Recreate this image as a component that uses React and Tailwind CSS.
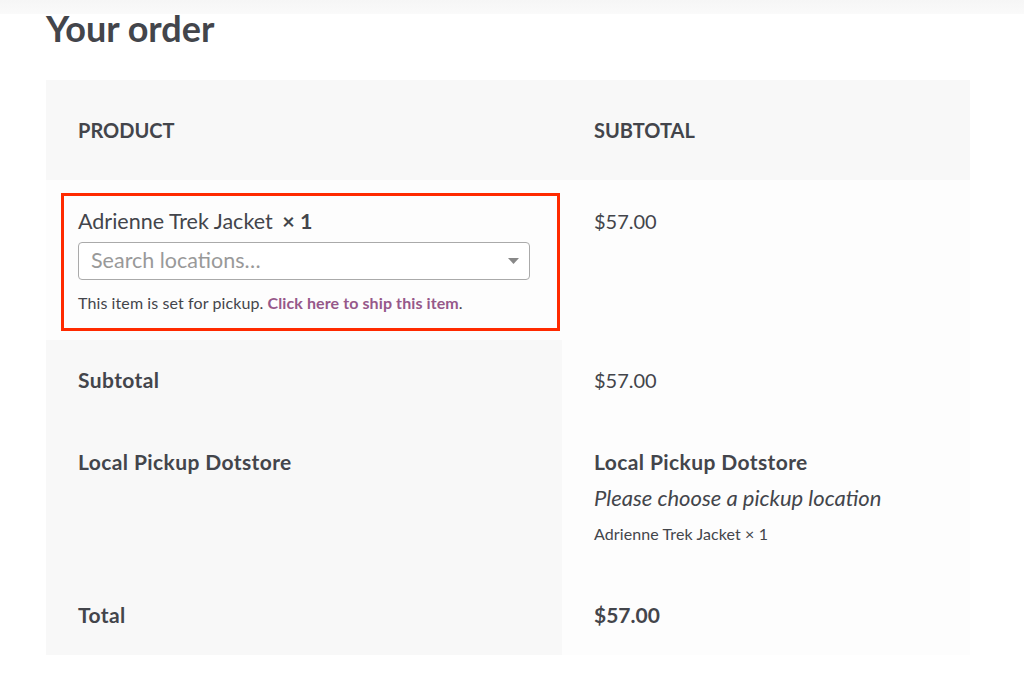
import { useState } from 'react';

const font = { fontFamily: 'Lato, "Source Sans Pro", "Noto Sans", sans-serif' };

function LocationSelect() {
  const [value] = useState('');
  return (
    <div className="relative mt-[3px] flex h-[38px] w-[452px] items-center rounded-[4px] border border-[#aaaaaa] bg-white pl-[12px] pr-[10px]">
      <span className="flex-1 text-[21.5px] leading-none text-[#999999]">{value || 'Search locations…'}</span>
      <svg width="11" height="6" viewBox="0 0 11 6">
        <path d="M0 0h11L5.5 6z" fill="#888888" />
      </svg>
    </div>
  );
}

export default function App() {
  return (
    <div className="min-h-screen bg-white text-[#43454b]" style={font}>
      <div className="h-[14px] bg-gradient-to-b from-[#f6f6f6] to-[#fafafa]" />

      <div className="px-[46px]">
        <h3 className="-mt-[8px] text-[36px] font-bold leading-[44px]">Your order</h3>

        <div className="mt-[30px] grid w-[924px] grid-cols-[516px_408px]">
          {/* header */}
          <div className="flex h-[100px] items-center bg-[#f8f8f8] px-[32px] text-[20px] font-bold uppercase">
            Product
          </div>
          <div className="flex h-[100px] items-center bg-[#f8f8f8] px-[32px] text-[20px] font-bold uppercase">
            Subtotal
          </div>

          {/* product row */}
          <div className="relative bg-[#fdfdfd] px-[32px] pb-[25px] pt-[23px]">
            <div className="text-[21.5px] leading-[36px]">
              Adrienne Trek Jacket <strong className="ml-[4px] font-bold">×&nbsp;1</strong>
            </div>
            <LocationSelect />
            <p className="mt-[11px] text-[16px] leading-[24px] tracking-[0.1px]">
              This item is set for pickup.{' '}
              <a href="#" className="font-bold text-[#96588a]">Click here to ship this item</a>.
            </p>
            <div className="pointer-events-none absolute left-[15px] top-[13px] h-[138px] w-[499px] border-[3px] border-[#ff2a00]" />
          </div>
          <div className="bg-[#fdfdfd] px-[32px] pt-[23px] text-[20px] leading-[36px]">$57.00</div>

          {/* subtotal */}
          <div className="bg-[#f8f8f8] px-[32px] py-[22px] text-[21px] font-bold leading-[36px] tracking-[0.4px]">Subtotal</div>
          <div className="bg-[#fdfdfd] px-[32px] py-[22px] text-[20px] leading-[36px]">$57.00</div>

          {/* shipping */}
          <div className="bg-[#f8f8f8] px-[32px] pb-[23px] pt-[24px] text-[21px] font-bold leading-[36px] tracking-[0.4px]">
            Local Pickup Dotstore
          </div>
          <div className="bg-[#fdfdfd] px-[32px] pb-[23px] pt-[24px]">
            <div className="text-[21px] font-bold leading-[36px] tracking-[0.4px]">Local Pickup Dotstore</div>
            <div className="text-[22px] italic leading-[36px]">Please choose a pickup location</div>
            <div className="text-[16px] leading-[36px] tracking-[0.1px]">Adrienne Trek Jacket × 1</div>
          </div>

          {/* total */}
          <div className="bg-[#f8f8f8] px-[32px] py-[22px] text-[21px] font-bold leading-[36px] tracking-[0.4px]">Total</div>
          <div className="bg-[#fdfdfd] px-[32px] py-[22px] text-[21px] font-bold leading-[36px]">$57.00</div>
        </div>
      </div>
    </div>
  );
}
